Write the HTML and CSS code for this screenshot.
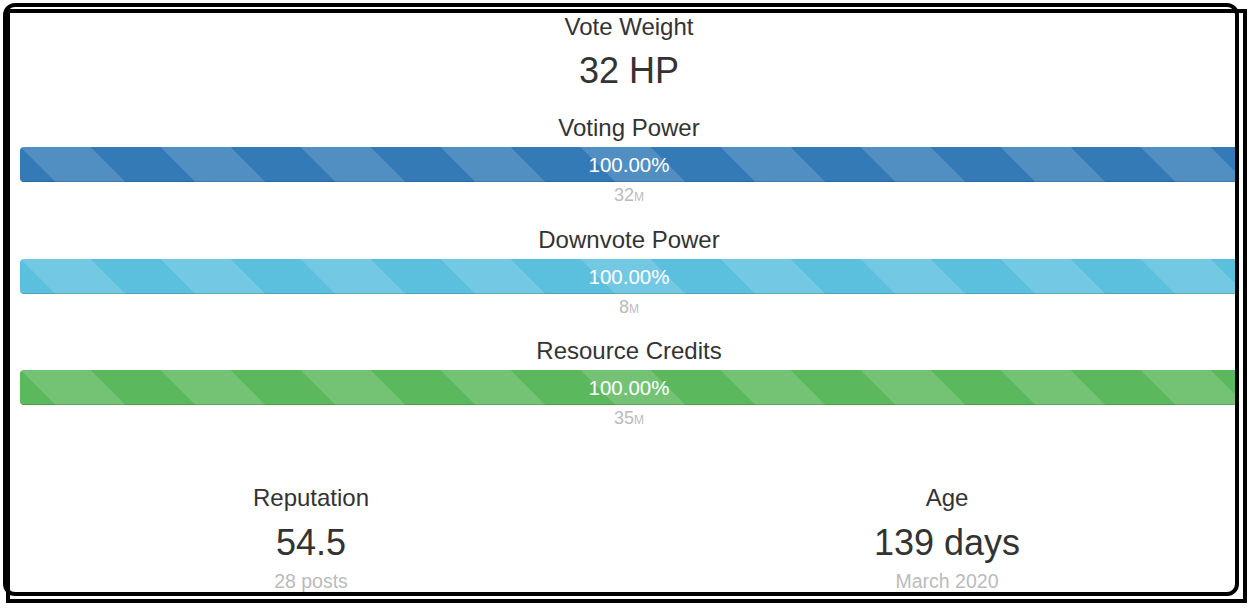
FILE: index.html
```html
<!DOCTYPE html>
<html lang="en">
<head>
  <meta charset="UTF-8">
  <meta name="viewport" content="width=device-width, initial-scale=1.0">
  <title>Account Stats</title>
  <link rel="stylesheet" href="styles.css">
</head>
<body>
  <div class="frame">
    <div class="card">
      <div class="content">
        <div class="label">Vote Weight</div>
        <div class="value">32 HP</div>

        <div class="meter">
          <div class="label">Voting Power</div>
          <div class="progress">
            <div class="progress-bar bar-primary" style="width: 100%">100.00%</div>
          </div>
          <div class="muted">32<small>M</small></div>
        </div>

        <div class="meter">
          <div class="label">Downvote Power</div>
          <div class="progress">
            <div class="progress-bar bar-info" style="width: 100%">100.00%</div>
          </div>
          <div class="muted">8<small>M</small></div>
        </div>

        <div class="meter">
          <div class="label">Resource Credits</div>
          <div class="progress">
            <div class="progress-bar bar-success" style="width: 100%">100.00%</div>
          </div>
          <div class="muted">35<small>M</small></div>
        </div>

        <div class="stats">
          <div class="stat">
            <div class="label">Reputation</div>
            <div class="value">54.5</div>
            <div class="muted sub">28 posts</div>
          </div>
          <div class="stat">
            <div class="label">Age</div>
            <div class="value">139 days</div>
            <div class="muted sub">March 2020</div>
          </div>
        </div>
      </div>
    </div>
  </div>
</body>
</html>
```

FILE: styles.css
```css
html, body {
  margin: 0;
  background: #ffffff;
}

body {
  font-family: "Liberation Sans", Arial, sans-serif;
  color: #333333;
  padding: 9px 8px 6px 6px;
  height: 609px;
  box-sizing: border-box;
  overflow: hidden;
}

/* sharp outer frame, the rounded card sits slightly up-left of it */
.frame {
  width: 1241px;
  height: 594px;
  border: 4px solid #000;
  box-sizing: border-box;
}

.card {
  width: 1236px;
  height: 593px;
  margin: -10px 0 0 -7px;
  border: 4px solid #000;
  border-radius: 12px;
  box-sizing: border-box;
  overflow: hidden;
  padding: 5px 0 0 13px;
}

.content {
  width: 1218px;
  text-align: center;
}

.label {
  font-size: 24px;
  line-height: 30px;
}

.value {
  font-size: 36px;
  line-height: 44px;
  margin-top: 7px;
}

.meter {
  margin-top: 20px;
}

.meter + .meter {
  margin-top: 16.5px;
}

.progress {
  margin-top: 4px;
  height: 35px;
  background: #f5f5f5;
  border-radius: 4px;
  overflow: hidden;
}

.progress-bar {
  height: 100%;
  color: #fff;
  font-size: 20.5px;
  line-height: 35px;
  box-shadow: inset 0 -1px 0 rgba(0, 0, 0, 0.15);
  background-image: linear-gradient(45deg, rgba(255, 255, 255, 0.15) 25%, transparent 25%, transparent 50%, rgba(255, 255, 255, 0.15) 50%, rgba(255, 255, 255, 0.15) 75%, transparent 75%, transparent);
  background-size: 140px 140px;
}

.bar-primary {
  background-color: #337ab7;
}

.bar-info {
  background-color: #5bc0de;
}

.bar-success {
  background-color: #5cb85c;
}

.muted {
  color: #bbbbbb;
  font-size: 18px;
  line-height: 22px;
  margin-top: 2px;
}

.muted small {
  font-size: 12px;
}

.stats {
  display: flex;
  justify-content: center;
  gap: 336px;
  margin-top: 52px;
}

.stat {
  width: 300px;
}

.stat .value {
  margin-top: 8px;
}

.muted.sub {
  font-size: 19.5px;
  line-height: 24px;
  margin-top: 4px;
}
```
